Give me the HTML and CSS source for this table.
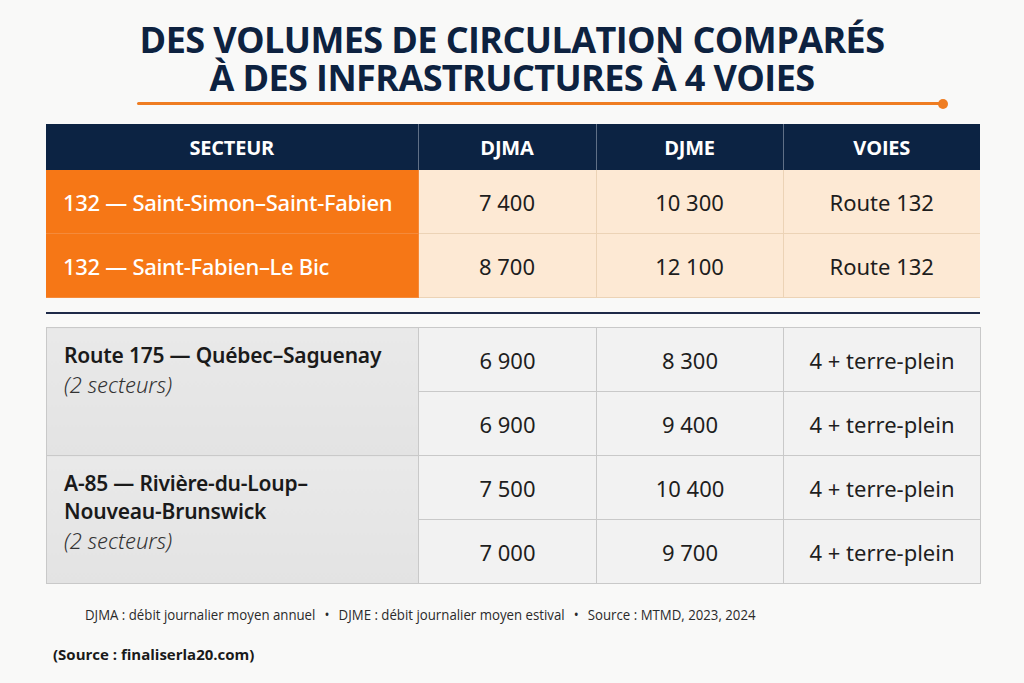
FILE: index.html
```html
<!DOCTYPE html>
<html lang="fr">
<head>
<meta charset="utf-8">
<title>Volumes de circulation</title>
<link rel="stylesheet" href="styles.css">
</head>
<body>
<div class="page">
  <h1 class="title">DES VOLUMES DE CIRCULATION COMPARÉS<br>À DES INFRASTRUCTURES À 4 VOIES</h1>
  <div class="rule"><span class="rule-dot"></span></div>

  <table class="tbl top">
    <colgroup><col class="c1"><col class="c2"><col class="c3"><col class="c4"></colgroup>
    <thead>
      <tr><th>SECTEUR</th><th>DJMA</th><th>DJME</th><th>VOIES</th></tr>
    </thead>
    <tbody>
      <tr><td class="sect">132 — Saint-Simon–Saint-Fabien</td><td>7 400</td><td>10 300</td><td>Route 132</td></tr>
      <tr><td class="sect">132 — Saint-Fabien–Le Bic</td><td>8 700</td><td>12 100</td><td>Route 132</td></tr>
    </tbody>
  </table>

  <div class="divider"></div>

  <table class="tbl low">
    <colgroup><col class="c1"><col class="c2"><col class="c3"><col class="c4"></colgroup>
    <tbody>
      <tr><td class="sect" rowspan="2"><span class="name">Route 175 — Québec–Saguenay</span><span class="note">(2 secteurs)</span></td><td>6 900</td><td>8 300</td><td>4 + terre-plein</td></tr>
      <tr><td>6 900</td><td>9 400</td><td>4 + terre-plein</td></tr>
      <tr><td class="sect" rowspan="2"><span class="name">A-85 — Rivière-du-Loup–<br>Nouveau-Brunswick</span><span class="note">(2 secteurs)</span></td><td>7 500</td><td>10 400</td><td>4 + terre-plein</td></tr>
      <tr><td>7 000</td><td>9 700</td><td>4 + terre-plein</td></tr>
    </tbody>
  </table>

  <p class="foot"><span class="squeeze">DJMA : débit journalier moyen annuel <span class="dot">•</span> DJME : débit journalier moyen estival <span class="dot">•</span> Source : MTMD, 2023, 2024</span></p>
  <p class="source">(Source : finaliserla20.com)</p>
</div>
</body>
</html>
```

FILE: styles.css
```css
html, body {
  margin: 0;
  padding: 0;
  background: #f9f9f8;
}
body {
  width: 1024px;
  height: 683px;
  overflow: hidden;
  font-family: "Noto Sans", "Open Sans", sans-serif;
  color: #1d1d1d;
}
.page {
  display: flex;
  flex-direction: column;
  padding-top: 21px;
}
.title {
  margin: 0;
  text-align: center;
  font-family: "Open Sans", "Noto Sans", sans-serif;
  font-weight: 700;
  font-size: 36px;
  line-height: 37.5px;
  color: #0d2240;
  letter-spacing: -0.6px;
}
.rule {
  margin: 6px 0 0 137px;
  width: 806px;
  height: 3px;
  background: #ef7d22;
  border-radius: 2px;
  position: relative;
}
.rule-dot {
  position: absolute;
  right: -5px;
  top: -3.5px;
  width: 10px;
  height: 10px;
  border-radius: 50%;
  background: #ef7d22;
}
.tbl {
  margin-left: 46px;
  width: 934px;
  border-collapse: collapse;
  table-layout: fixed;
}
.c1 { width: 372px; }
.c2 { width: 178px; }
.c3 { width: 187px; }
.c4 { width: 197px; }
.top { margin-top: 19px; }
.tbl th {
  background: #0c2343;
  color: #fff;
  font-family: "Open Sans", "Noto Sans", sans-serif;
  font-weight: 700;
  font-size: 20px;
  height: 46px;
  padding: 0;
  border-left: 1px solid #5f6f86;
  letter-spacing: -0.2px;
}
.tbl th:first-child { border-left: none; }
.tbl td {
  text-align: center;
  font-size: 22px;
  padding: 0;
}
.top td {
  height: 63px;
  background: #fde9d4;
  border: 1px solid #ecd3b6;
}
.top td.sect {
  background: #f67716;
  color: #fff;
  text-align: left;
  padding-left: 17px;
  font-size: 22px;
  font-weight: 500;
  letter-spacing: -0.3px;
  border-color: #f58a3a;
  border-left: none;
}
.top tr:first-child td { border-top: none; }
.top td:last-child { border-right: none; }
.divider {
  margin: 14px 0 0 46px;
  width: 934px;
  height: 2px;
  background: #1e2a48;
}
.low { margin-top: 13px; }
.low td {
  height: 63px;
  background: #f2f2f2;
  border: 1px solid #c9c9c9;
  color: #1e1e1e;
}
.low td.sect {
  background: linear-gradient(180deg, #e9e9e9, #e3e3e3);
  text-align: left;
  vertical-align: top;
  padding: 13px 0 0 17px;
}
.name {
  display: block;
  font-size: 21px;
  font-weight: 600;
  line-height: 28px;
  letter-spacing: -0.2px;
  color: #1a1a1a;
}
.note {
  display: block;
  font-size: 22px;
  font-style: italic;
  font-weight: 300;
  line-height: 30px;
  color: #333;
}
.squeeze {
  display: inline-block;
  transform-origin: 0 50%;
  white-space: nowrap;
  transform: scaleX(0.945);
}
.foot {
  margin: 21px 0 0 85px;
  font-family: "Open Sans", "Noto Sans", sans-serif;
  font-size: 14px;
  color: #2a2a2a;
}
.dot { margin: 0 6px; }
.source {
  margin: 20px 0 0 53px;
  font-family: "Open Sans", "Noto Sans", sans-serif;
  font-weight: 700;
  font-size: 15px;
  color: #1a1a1a;
}
```
